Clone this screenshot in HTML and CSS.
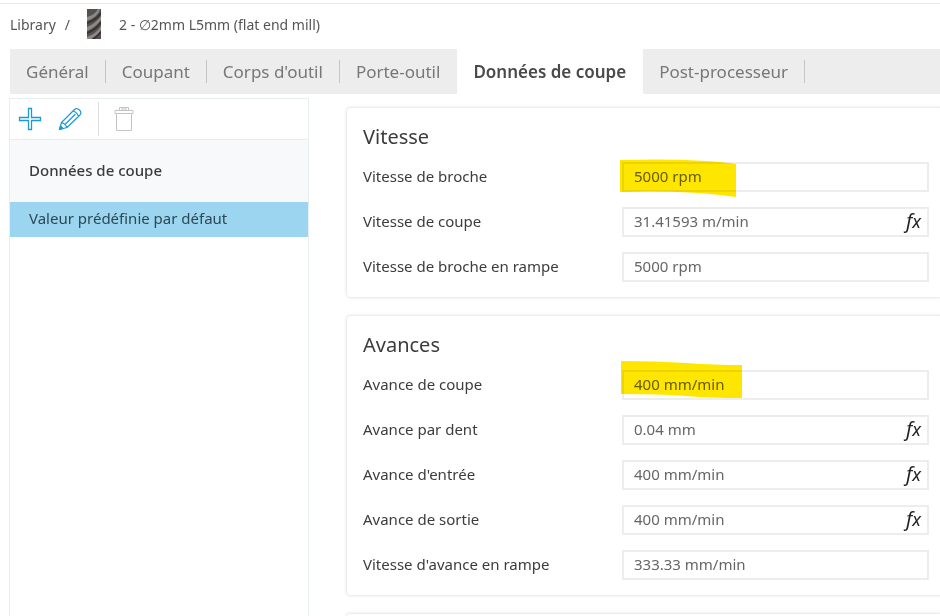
FILE: index.html
```html
<!DOCTYPE html>
<html lang="fr">

<head>
  <meta charset="UTF-8">
  <meta name="viewport" content="width=device-width, initial-scale=1.0">
  <title>Library</title>
  <link rel="stylesheet" href="styles.css">
</head>

<body>
  <header class="breadcrumb">
    <a href="#">Library</a>
    <span class="slash">/</span>
    <svg class="mill" width="14" height="30" viewBox="0 0 14 30">
      <rect width="14" height="30" fill="#55514f"/>
      <path d="M0 8Q8 6 11 0H13Q11 8 0 12ZM0 18Q8 15 14 7V11Q9 18 0 22ZM0 28Q9 25 14 17V21Q10 27 4 30H0Z" fill="#8d8986"/>
      <path d="M0 14Q9 11 14 4M0 24Q9 21 14 13M6 30Q11 27 14 23" fill="none" stroke="#363332" stroke-width="2"/>
    </svg>
    <span>2 - ∅2mm L5mm (flat end mill)</span>
  </header>

  <nav class="tabs">
    <button class="tab">Général</button>
    <button class="tab">Coupant</button>
    <button class="tab">Corps d'outil</button>
    <button class="tab last">Porte-outil</button>
    <button class="tab active">Données de coupe</button>
    <button class="tab">Post-processeur</button>
  </nav>

  <div class="content">
    <aside class="sidebar">
      <div class="toolbar">
        <button class="tool" aria-label="Ajouter">
          <svg width="24" height="24" viewBox="0 0 24 24"><path d="M10.500 1.500h3v9h9v3h-9v9h-3v-9h-9v-3h9z" fill="none" stroke="#1a9bd7" stroke-width="1.300"/></svg>
        </button>
        <button class="tool" aria-label="Modifier">
          <svg width="24" height="24" viewBox="0 0 24 24" fill="none" stroke="#1a9bd7" stroke-width="1.200" stroke-linejoin="round"><path d="M1.500 22.500l2-7L16.500 2.500q2.500-2 5 .5t.5 5L9 20.500zM3.500 15.500q4 1 5.500 5M15 4q4 1 5.500 5.500M6.500 18L17.500 7"/><path d="M1.500 22.500l1-3.500 2.500 2.500z" fill="#1a9bd7"/></svg>
        </button>
        <span class="divider"></span>
        <button class="tool" aria-label="Supprimer" disabled>
          <svg width="20" height="26" viewBox="0 0 20 26" fill="none" stroke="#c4c4c4"><path d="M1 4.500h18v3H1zM5.500 4.500v-3h9v3M2.500 7.500v17h15v-17M7 3h6"/></svg>
        </button>
      </div>
      <h2 class="side-title">Données de coupe</h2>
      <a class="preset" href="#">Valeur prédéfinie par défaut</a>
    </aside>

    <main class="panels">
      <section class="card">
        <h3>Vitesse</h3>
        <div class="row">
          <label for="spindle">Vitesse de broche</label>
          <div class="field">
            <input type="text" id="spindle" value="5000 rpm">
            <svg class="marker" width="116" height="38" viewBox="0 0 116 38"><path d="M0 1Q75-1 116 5V38Q65 31 0 33Z" fill="#ffe600"/></svg>
          </div>
        </div>
        <div class="row">
          <label for="cutspeed">Vitesse de coupe</label>
          <div class="field"><input type="text" id="cutspeed" value="31.41593 m/min"><span class="fx">f<small>x</small></span></div>
        </div>
        <div class="row">
          <label for="rampspindle">Vitesse de broche en rampe</label>
          <div class="field"><input type="text" id="rampspindle" value="5000 rpm"></div>
        </div>
      </section>

      <section class="card">
        <h3>Avances</h3>
        <div class="row">
          <label for="cutfeed">Avance de coupe</label>
          <div class="field">
            <input type="text" id="cutfeed" value="400 mm/min">
            <svg class="marker high" width="121" height="37" viewBox="0 0 121 37"><path d="M0 0Q35 0 65 2T121 4V37Q90 37 65 35T0 33Z" fill="#ffe600"/></svg>
          </div>
        </div>
        <div class="row">
          <label for="toothfeed">Avance par dent</label>
          <div class="field"><input type="text" id="toothfeed" value="0.04 mm"><span class="fx">f<small>x</small></span></div>
        </div>
        <div class="row">
          <label for="leadin">Avance d'entrée</label>
          <div class="field"><input type="text" id="leadin" value="400 mm/min"><span class="fx">f<small>x</small></span></div>
        </div>
        <div class="row">
          <label for="leadout">Avance de sortie</label>
          <div class="field"><input type="text" id="leadout" value="400 mm/min"><span class="fx">f<small>x</small></span></div>
        </div>
        <div class="row">
          <label for="rampfeed">Vitesse d'avance en rampe</label>
          <div class="field"><input type="text" id="rampfeed" value="333.33 mm/min"></div>
        </div>
      </section>

      <section class="card rest"></section>
    </main>
  </div>
</body>

</html>
```

FILE: styles.css
```css
* {
  box-sizing: border-box;
}

body {
  margin: 0;
  height: 100vh;
  overflow: hidden;
  display: flex;
  flex-direction: column;
  font-family: "Noto Sans", sans-serif;
  font-size: 15px;
  color: #3c3c3c;
  background: #fff;
}

button,
input {
  font: inherit;
}

button {
  border: none;
  background: none;
}

.breadcrumb {
  flex: none;
  display: flex;
  align-items: center;
  height: 46px;
  margin-top: 3px;
  padding: 0 10px 5px;
  border-top: 1px solid #e8e8e8;
  font-size: 14px;
  color: #555;
}

.breadcrumb a {
  color: inherit;
  text-decoration: none;
}

.slash {
  margin-left: 9px;
}

.mill {
  margin: 0 18px 0 17px;
}

.tabs {
  flex: none;
  display: flex;
  height: 45px;
  margin-left: 10px;
  background: #ededed;
}

.tab {
  display: flex;
  align-items: center;
  padding: 0 0 0 16px;
  font-size: 17px;
  color: #777;
}

.tab::after {
  content: "";
  width: 1px;
  height: 23px;
  margin-left: 16px;
  background: #c4c4c4;
}

.tab.last::after,
.tab.active::after {
  background: none;
}

.tab.active {
  background: #fff;
  font-weight: 600;
  color: #4a4a4a;
}

.content {
  flex: 1;
  min-height: 0;
  display: flex;
  padding: 4px 0 0 9px;
}

.sidebar {
  flex: none;
  width: 300px;
  border: 1px solid #e8eef0;
  border-bottom: none;
}

.toolbar {
  display: flex;
  align-items: center;
  height: 40px;
  padding-left: 8px;
}

.tool {
  display: flex;
  padding: 0;
  margin-right: 16px;
}

.divider {
  width: 1px;
  height: 34px;
  margin-right: 15px;
  background: #dcdcdc;
}

.side-title {
  margin: 0;
  height: 63px;
  padding-left: 19px;
  border-top: 1px solid #e8eef0;
  background: #f7f9fb;
  font-size: 15px;
  font-weight: 500;
  line-height: 60px;
}

.preset {
  display: block;
  height: 35px;
  padding-left: 19px;
  background: #9bd5ef;
  color: #2d4754;
  line-height: 33px;
  text-decoration: none;
}

.panels {
  flex: 1;
  display: flex;
  flex-direction: column;
  gap: 19px;
  padding: 10px 0 0 38px;
}

.card {
  flex: none;
  padding: 15px 11px 15px 16px;
  border-radius: 4px 0 0 4px;
  box-shadow: 0 0 3px 1px #e4e4e4;
}

.card.rest {
  flex: 1;
  padding: 0;
  border-radius: 4px 0 0 0;
}

.card h3 {
  margin: 0 0 11px;
  font-size: 20px;
  font-weight: 400;
  line-height: 28px;
}

.row {
  display: flex;
  align-items: center;
}

.row + .row {
  margin-top: 15px;
}

.row label {
  width: 259px;
  padding-bottom: 3px;
}

.field {
  position: relative;
  flex: 1;
  display: flex;
}

.field input {
  flex: 1;
  height: 30px;
  padding: 0 10px 3px;
  border: 2px solid #ededed;
  outline: none;
  color: #666;
}

.fx {
  position: absolute;
  right: 8px;
  top: 0;
  font-size: 20px;
  font-style: italic;
  line-height: 28px;
  color: #222;
}

.fx small {
  font-size: 18px;
}

.marker {
  position: absolute;
  left: -2px;
  top: -3px;
  mix-blend-mode: multiply;
}

.marker.high {
  left: -1px;
  top: -9px;
}
```
